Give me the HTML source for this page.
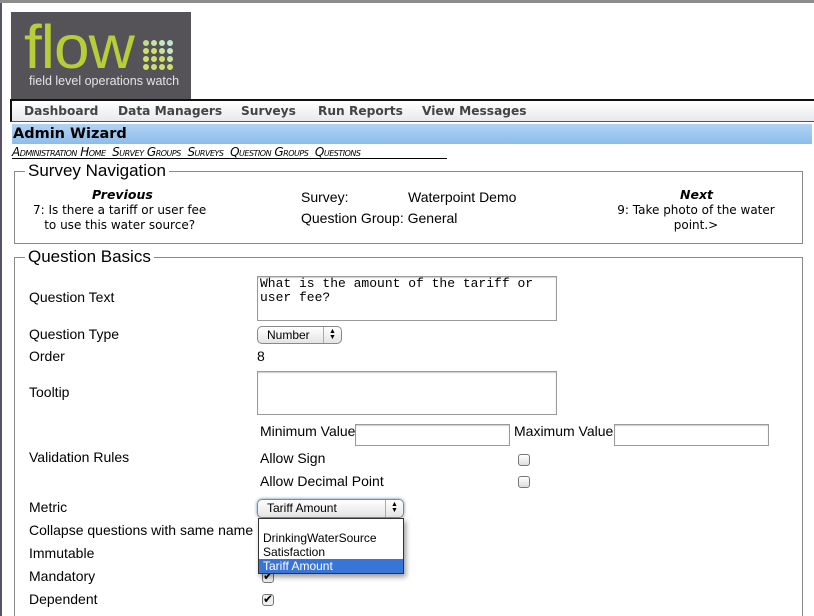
<!DOCTYPE html>
<html><head><meta charset="utf-8"><style>
*{margin:0;padding:0;box-sizing:border-box}
html{width:814px;height:616px;overflow:hidden}
body{width:814px;height:616px;overflow:hidden;background:#fff;position:relative;font-family:"Liberation Sans",Arial,sans-serif;font-size:14px;color:#000}
.a{position:absolute;white-space:nowrap}
.v{font-family:"DejaVu Sans",Verdana,sans-serif}
.fs{position:absolute;border:1px solid #8a8a8a}
.lg{position:absolute;background:#fff;padding:0 3px;font-size:17px;top:-11px;left:10px}
.inp{position:absolute;border:1px solid #9a9a9a;background:#fff;box-shadow:inset 0 1px 1px #ccc}
.cb{position:absolute;width:12px;height:12px;border:1px solid #777;border-radius:3px;background:linear-gradient(#fff,#ddd)}
.sel{position:absolute;border:1px solid #888;border-radius:5px;background:linear-gradient(#fff,#e4e4e4);font-size:12px;padding-left:9px}
.ar{position:absolute;right:0;top:0;bottom:0;width:18px;border-left:1px solid #aaa;font-size:7px;text-align:center;line-height:6px;padding-top:2px}
</style></head><body>
<div class="a" style="left:0;top:0;width:814px;height:3px;background:#8c8c8c"></div>
<div class="a" style="left:0;top:3px;width:2px;height:613px;background:#556"></div>
<!-- logo -->
<div class="a" style="left:11px;top:12px;width:180px;height:87px;background:#565358">
<div class="a" style="left:13px;top:2px;font-size:64px;color:#b7cd3a;letter-spacing:-1px;line-height:66px;transform:scaleY(0.95)">flow</div>
<div class="a" style="left:18px;top:62px;font-size:12.5px;color:#e4e4e4">field level operations watch</div>
</div>
<svg class="a" style="left:142px;top:39px" width="32" height="32">
<g fill="#cde06c">
<circle cx="4" cy="4" r="3" fill="#c3dc87"/><circle cx="12" cy="4" r="3" fill="#c8e3a4"/><circle cx="20" cy="4" r="3" fill="#c8e6c0"/><circle cx="28" cy="4" r="3" fill="#bfe4d6"/>
<circle cx="4" cy="12" r="3"/><circle cx="12" cy="12" r="3"/><circle cx="20" cy="12" r="3" fill="#c8e3a4"/><circle cx="28" cy="12" r="3" fill="#c8e6c0"/>
<circle cx="4" cy="20" r="3"/><circle cx="12" cy="20" r="3"/><circle cx="20" cy="20" r="3"/><circle cx="28" cy="20" r="3" fill="#c8e3a4"/>
<circle cx="4" cy="28" r="3"/><circle cx="12" cy="28" r="3"/><circle cx="20" cy="28" r="3"/><circle cx="28" cy="28" r="3"/>
</g></svg>
<!-- nav -->
<div class="a v" style="left:10px;top:99px;width:804px;height:23px;border-top:2px solid #111;border-left:2px solid #111;border-bottom:1px solid #555;background:linear-gradient(#fff,#e8e9ee);font-weight:bold;font-size:12.2px;color:#444">
<span class="a" style="left:12px;top:3px">Dashboard</span>
<span class="a" style="left:106px;top:3px">Data Managers</span>
<span class="a" style="left:229px;top:3px">Surveys</span>
<span class="a" style="left:306px;top:3px">Run Reports</span>
<span class="a" style="left:410px;top:3px">View Messages</span>
</div>
<div class="a v" style="left:12px;top:124px;width:800px;height:20px;background:linear-gradient(#b1d3f4,#8dbcea);font-weight:bold;font-size:14.5px;line-height:20px;padding-left:1px">Admin Wizard</div>
<div class="a v" style="left:12px;top:145px;width:435px;height:14px;border-bottom:1px solid #000;font-size:12px;font-style:italic;font-variant:small-caps;line-height:14px;letter-spacing:-0.5px">Administration Home&nbsp; Survey Groups&nbsp; Surveys&nbsp; Question Groups&nbsp; Questions</div>
<!-- survey nav -->
<div class="fs" style="left:14px;top:171px;width:789px;height:73px">
<div class="lg">Survey Navigation</div></div>
<div class="a v" style="left:92px;top:187px;font-weight:bold;font-style:italic;font-size:12.5px">Previous</div>
<div class="a v" style="left:33px;top:203px;font-size:12px;text-align:center;line-height:15px">7: Is there a tariff or user fee<br>to use this water source?</div>
<div class="a" style="left:301px;top:189px">Survey:</div>
<div class="a" style="left:408px;top:189px">Waterpoint Demo</div>
<div class="a" style="left:301px;top:210px">Question Group: General</div>
<div class="a v" style="left:680px;top:187px;font-weight:bold;font-style:italic;font-size:12.5px">Next</div>
<div class="a v" style="left:608px;top:203px;width:176px;font-size:12px;text-align:center;line-height:15px;white-space:normal">9: Take photo of the water point.&gt;</div>
<!-- question basics -->
<div class="fs" style="left:14px;top:257px;width:789px;height:380px">
<div class="lg">Question Basics</div></div>
<div class="a" style="left:29px;top:289px">Question Text</div>
<div class="inp" style="left:257px;top:276px;width:300px;height:45px;font-family:'Liberation Mono',monospace;font-size:13px;line-height:14px;padding:0 2px;white-space:normal">What is the amount of the tariff or user fee?</div>
<div class="a" style="left:29px;top:326px">Question Type</div>
<div class="sel" style="left:257px;top:326px;width:85px;height:18px;line-height:16px">Number<div class="ar">▲<br>▼</div></div>
<div class="a" style="left:29px;top:348px">Order</div>
<div class="a" style="left:257px;top:348px">8</div>
<div class="a" style="left:29px;top:384px">Tooltip</div>
<div class="inp" style="left:257px;top:371px;width:300px;height:44px"></div>
<div class="a" style="left:260px;top:423px">Minimum Value</div>
<div class="inp" style="left:355px;top:424px;width:155px;height:22px"></div>
<div class="a" style="left:514px;top:423px">Maximum Value</div>
<div class="inp" style="left:614px;top:424px;width:155px;height:22px"></div>
<div class="a" style="left:29px;top:449px">Validation Rules</div>
<div class="a" style="left:260px;top:450px">Allow Sign</div>
<div class="cb" style="left:518px;top:454px"></div>
<div class="a" style="left:260px;top:473px">Allow Decimal Point</div>
<div class="cb" style="left:518px;top:476px"></div>
<div class="a" style="left:29px;top:499px">Metric</div>
<div class="a" style="left:29px;top:522px">Collapse questions with same name</div>
<div class="a" style="left:29px;top:545px">Immutable</div>
<div class="a" style="left:29px;top:568px">Mandatory</div>
<div class="a" style="left:29px;top:591px">Dependent</div>
<div class="cb" style="left:262px;top:571px;background:#eee;font-size:12px;line-height:9px;text-align:center">✔</div>
<div class="cb" style="left:262px;top:594px;background:#eee;font-size:12px;line-height:9px;text-align:center">✔</div>
<div class="sel" style="left:257px;top:499px;width:147px;height:19px;line-height:17px;font-size:12px;box-shadow:0 0 3px #68a">Tariff Amount<div class="ar">▲<br>▼</div></div>
<div class="a" style="left:258px;top:518px;width:146px;height:56px;border:1px solid #333;background:#fff;box-shadow:2px 3px 5px rgba(0,0,0,.4);font-size:12px;line-height:14px">
<div style="padding-left:4px;margin-top:12px">DrinkingWaterSource</div>
<div style="padding-left:4px">Satisfaction</div>
<div style="padding-left:4px;background:#3875d7;color:#fff">Tariff Amount</div>
</div>
</body></html>
